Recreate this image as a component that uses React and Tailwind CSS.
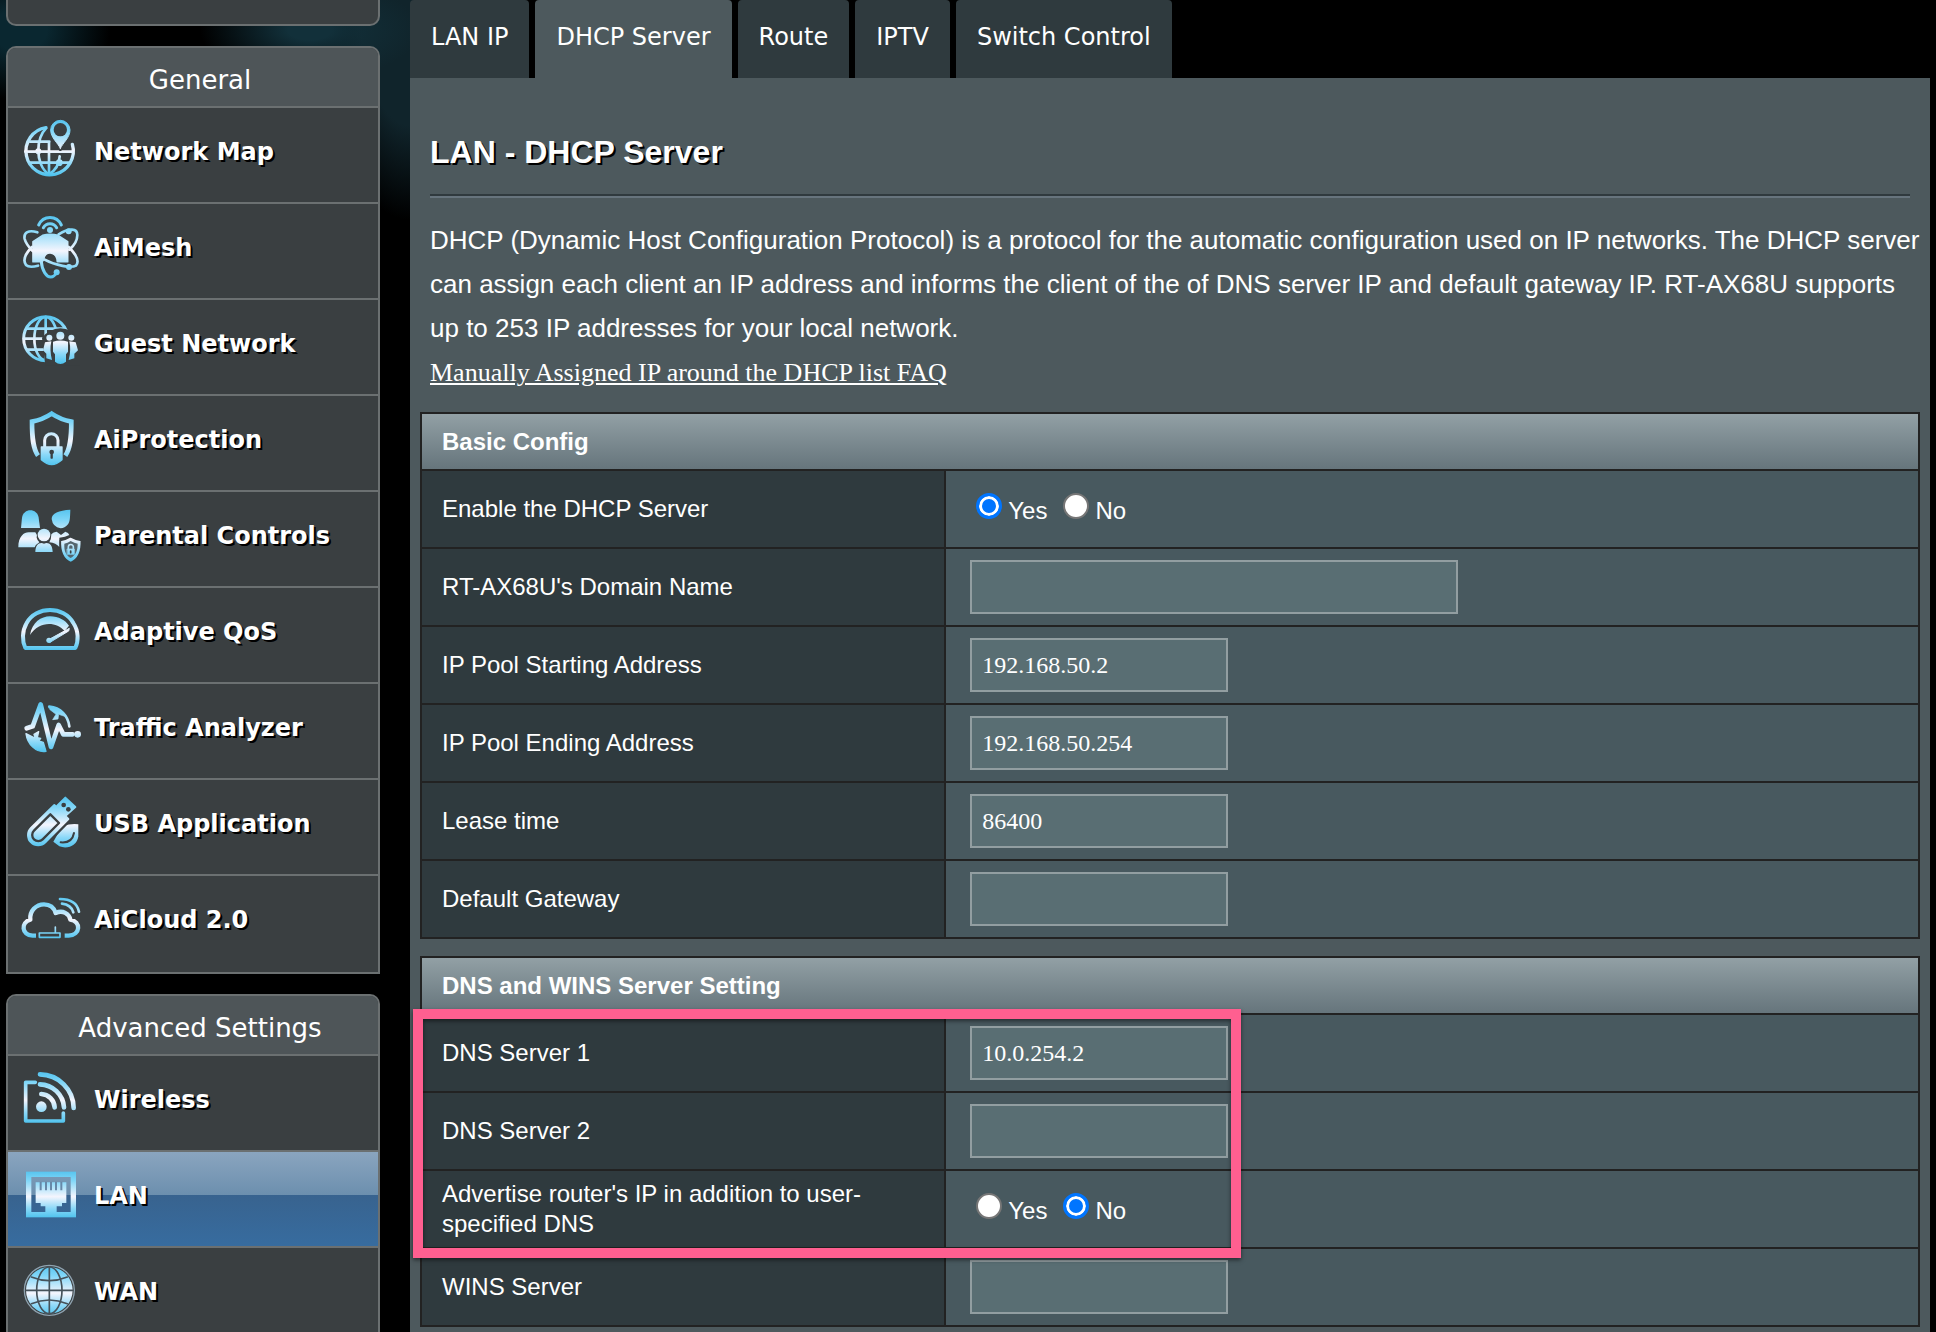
import { useState } from "react";

const SHADE = "#3a3f41";

function Icon({ id, top = 20, bottom = 190, children }) {
  return (
    <svg
      viewBox="0 0 216 216"
      className="size-18 shrink-0"
      fill="none"
      stroke={`url(#${id})`}
      strokeLinecap="round"
      strokeLinejoin="round"
      aria-hidden="true"
    >
      <defs>
        <linearGradient id={id} gradientUnits="userSpaceOnUse" x1="0" x2="0" y1={top} y2={bottom}>
          <stop offset="0" stopColor="#55c3ee" />
          <stop offset="0.2" stopColor="#7fd6f8" />
          <stop offset="0.55" stopColor="#f4f5fd" />
          <stop offset="0.8" stopColor="#8ad8f8" />
          <stop offset="1" stopColor="#4fc3ee" />
        </linearGradient>
      </defs>
      {children}
    </svg>
  );
}

function NetworkMapIcon() {
  const g = "url(#i-map)";
  return (
    <Icon id="i-map" top={15} bottom={182}>
      <path d="M102 38 A71 71 0 1 0 181 88" strokeWidth="10" />
      <path d="M102 40 C84 58 79 82 79 107 S88 164 111 178 C134 164 142 140 143 124" strokeWidth="8" />
      <path d="M111 80 V178 M54 80 H112 M40 110 H180 M52 143 H172" strokeWidth="8" />
      <circle cx="79" cy="109" r="9" fill={g} stroke="none" />
      <circle cx="142" cy="143" r="10" fill={g} stroke="none" />
      <path d="M145 103 C138 84 117 68 117 45 A28 28 0 1 1 173 45 C173 68 152 84 145 103Z" fill={g} stroke={SHADE} strokeWidth="10" />
      <path d="M145 100 C138 84 116 68 116 45 A29 29 0 1 1 174 45 C174 68 152 84 145 100Z" fill={g} strokeWidth="3" />
      <circle cx="145" cy="44" r="20" fill={SHADE} stroke="none" />
    </Icon>
  );
}

function AiMeshIcon() {
  const g = "url(#i-mesh)";
  return (
    <Icon id="i-mesh" top={15} bottom={205}>
      <path d="M80 42 C94 12 134 12 148 42 M94 50 C103 34 125 34 134 50" strokeWidth="9" />
      <circle cx="114" cy="57" r="9" fill={g} stroke="none" />
      <path d="M76 64 C50 56 34 64 38 84 C42 100 52 110 62 120 M60 108 C38 130 32 148 42 162 C50 170 64 168 78 164" strokeWidth="8" />
      <path d="M140 70 C172 50 196 52 196 72 C196 90 186 104 172 116 M170 108 C192 130 204 150 192 164 C178 172 130 164 98 146" strokeWidth="8" />
      <path d="M88 152 C90 180 104 198 116 198 C124 198 130 192 134 184" strokeWidth="9" />
      <circle cx="170" cy="61" r="9" fill={g} stroke="none" />
      <circle cx="171" cy="168" r="9" fill={g} stroke="none" />
      <circle cx="134" cy="184" r="9" fill={g} stroke="none" />
      <path d="M63 92 L92 73 Q114 67 138 73 L167 92 V152 H136 C134 118 96 118 95 146 L90 152 H63Z" fill={g} strokeWidth="5" />
    </Icon>
  );
}

function GuestNetworkIcon() {
  const g = "url(#i-guest)";
  return (
    <Icon id="i-guest" top={26} bottom={170}>
      <circle cx="101" cy="95" r="66" strokeWidth="9" />
      <ellipse cx="101" cy="95" rx="34" ry="65" strokeWidth="8" />
      <path d="M101 30 V160 M46 65 H156 M36 95 H166 M46 128 H156" strokeWidth="8" />
      <path d="M90 92 Q112 66 145 64 Q178 66 204 92 V176 H100Z" fill={SHADE} stroke="none" />
      <g fill={g} stroke="none">
        <circle cx="145" cy="86" r="12" />
        <circle cx="112" cy="92" r="9" />
        <circle cx="178" cy="92" r="9" />
        <path d="M123 104 Q145 97 168 104 V134 L162 142 V164 Q145 178 129 164 V142 L123 134Z" />
        <path d="M99 106 L118 103 Q112 130 120 159 L103 154 V140 L93 130Z" />
        <path d="M191 106 L172 103 Q178 130 170 159 L187 154 V140 L198 130Z" />
      </g>
    </Icon>
  );
}

function AiProtectionIcon() {
  const g = "url(#i-protect)";
  return (
    <Icon id="i-protect" top={24} bottom={188}>
      <path d="M78 158 C64 138 60 110 60 56 Q92 50 119 32 Q146 50 178 56 C178 110 174 138 160 158" strokeWidth="14" strokeLinecap="butt" strokeLinejoin="miter" />
      <path d="M98 134 V112 A20 20 0 0 1 138 112 V134" strokeWidth="9" />
      <path d="M88 132 H150 V170 Q134 184 119 185 Q104 184 88 170Z" fill={g} strokeWidth="4" />
      <circle cx="119" cy="147" r="7" fill={SHADE} stroke="none" />
      <path d="M119 147 V164" stroke={SHADE} strokeWidth="7" />
    </Icon>
  );
}

function ParentalIcon() {
  const g = "url(#i-parent)";
  return (
    <Icon id="i-parent" top={30} bottom={192}>
      <g fill={g} stroke="none">
        <path d="M27 87 L30 56 C34 26 76 26 80 56 L84 87Z" />
        <path d="M119 60 C119 42 140 34 175 32 C174 60 174 66 168 76 Q158 88 146 88 Q122 84 119 60Z" />
        <path d="M19 145 C19 112 36 100 50 100 H70 Q76 106 74 116 Q76 124 82 130 Q72 136 68 145Z" />
        <path d="M118 106 Q124 98 134 98 L147 108 L160 98 Q170 100 172 108 Q160 114 142 116 V144 Q132 132 112 130 Q118 120 118 106Z" />
        <circle cx="96" cy="108" r="19" />
        <path d="M70 159 C70 138 82 128 96 134 C110 128 122 138 122 159Z" />
      </g>
      <path d="M145 124 Q162 122 176 113 Q192 122 208 124 C210 160 198 181 176 191 C154 181 143 160 145 124Z" fill={g} stroke={SHADE} strokeWidth="5" />
      <path d="M157 134 Q167 132 176 126 Q187 132 197 134 C197 156 191 168 176 177 C161 168 156 156 157 134Z" fill="#55666f" stroke="none" />
      <path d="M169 150 V144 A7 7 0 0 1 184 144 V150" strokeWidth="5" />
      <path d="M166 150 H187 V166 H166Z" fill={g} strokeWidth="2" />
      <path d="M176 156 V161" stroke={SHADE} strokeWidth="5" />
    </Icon>
  );
}

function QosIcon() {
  const g = "url(#i-qos)";
  return (
    <Icon id="i-qos" top={40} bottom={166}>
      <path d="M40 159 C30 138 30 108 44 84 C72 32 156 32 184 84 C200 108 200 138 190 159Z" strokeWidth="12" />
      <path d="M54 120 C60 82 88 64 114 64 C140 64 160 76 171 92 L158 108 C132 78 80 78 54 120Z" fill={g} stroke="none" />
      <path d="M106 136 L172 100 L170 108 L114 142Z" fill={g} strokeWidth="3" />
      <circle cx="111" cy="136" r="8" fill={g} stroke="none" />
    </Icon>
  );
}

function TrafficIcon() {
  const g = "url(#i-traffic)";
  return (
    <Icon id="i-traffic" top={32} bottom={184}>
      <path d="M44 112 L62 106 L86 40 L117 168 L140 102 L154 130 H182" strokeWidth="14" />
      <circle cx="197" cy="130" r="10" fill={g} stroke="none" />
      <path d="M112 47 C146 50 168 74 172 106" strokeWidth="8" />
      <path d="M110 46 L150 60 L158 76 L140 70 L138 84 L122 86 L132 70 L114 56Z" fill={g} strokeWidth="2" />
      <path d="M42 128 C46 160 72 186 102 181 L94 154 L80 150 L86 142 L76 140 L80 122 L66 130 L70 142Z" fill={g} strokeWidth="4" />
    </Icon>
  );
}

function UsbIcon() {
  const g = "url(#i-usb)";
  return (
    <Icon id="i-usb" top={30} bottom={182}>
      <path d="M150 118 Q180 108 199 112 V148 C196 176 166 188 142 178 L124 164Z" fill={g} stroke="none" />
      <path d="M186 138 C182 160 166 168 146 166" stroke={SHADE} strokeWidth="6" />
      <path d="M127 54 L169 96 L100 166 A30 30 0 0 1 57 123Z" fill={SHADE} stroke={SHADE} strokeWidth="20" />
      <path d="M127 54 L169 96 L100 166 A30 30 0 0 1 57 123Z" fill={g} strokeWidth="6" />
      <path d="M115 82 L141 108 L92 157 A17 17 0 0 1 66 131Z" stroke={SHADE} strokeWidth="7" />
      <path d="M160 32 L190 60 L163 84 L135 57Z" fill={g} strokeWidth="6" />
      <circle cx="155" cy="54" r="7" fill={SHADE} stroke="none" />
      <circle cx="169" cy="67" r="7" fill={SHADE} stroke="none" />
    </Icon>
  );
}

function AiCloudIcon() {
  return (
    <Icon id="i-cloud" top={40} bottom={168}>
      <path d="M72 158 H62 C28 156 26 118 55 110 C52 84 72 64 96 64 C114 64 126 74 131 90 C152 80 172 92 175 110 C208 116 206 156 170 158 H158" strokeWidth="13" strokeLinecap="butt" />
      <path d="M82 150 H144 V163 H82Z M130 150 V132" strokeWidth="5" />
      <path d="M144 48 C176 48 196 62 201 86 M150 62 C168 64 180 74 184 88" strokeWidth="8" />
    </Icon>
  );
}

function WirelessIcon() {
  return (
    <Icon id="i-wifi" top={28} bottom={180}>
      <path d="M70 58 H41 V174 H154 V150" strokeWidth="11" />
      <circle cx="88" cy="131" r="16" fill="url(#i-wifi)" stroke="none" />
      <path d="M88 93 A42 42 0 0 1 128 133 M84 64 A74 74 0 0 1 156 133 M84 34 A102 102 0 0 1 185 135" strokeWidth="14" />
    </Icon>
  );
}

function LanIcon() {
  return (
    <Icon id="i-lan" top={36} bottom={176}>
      <rect x="50" y="46" width="134" height="121" strokeWidth="16" strokeLinejoin="miter" />
      <path d="M71 70 H163 V132 H150 V142 H134 V168 H100 V142 H86 V132 H71Z" fill="url(#i-lan)" stroke="none" />
      <path d="M86 68 V94 M102 68 V94 M117 68 V94 M132 68 V94 M148 68 V94" stroke="#6788a8" strokeWidth="6" strokeLinecap="butt" />
    </Icon>
  );
}

function WanIcon() {
  return (
    <Icon id="i-wan" top={30} bottom={184}>
      <circle cx="112" cy="106" r="75" stroke="#8fa3b0" strokeWidth="4" />
      <circle cx="112" cy="106" r="70" fill="url(#i-wan)" stroke="none" />
      <g stroke="#46525a" strokeWidth="5">
        <path d="M112 36 V176 M42 106 H182" />
        <ellipse cx="112" cy="106" rx="38" ry="70" />
        <path d="M58 66 Q112 88 166 66 M58 146 Q112 124 166 146" />
      </g>
    </Icon>
  );
}

const general = [
  ["Network Map", NetworkMapIcon],
  ["AiMesh", AiMeshIcon],
  ["Guest Network", GuestNetworkIcon],
  ["AiProtection", AiProtectionIcon],
  ["Parental Controls", ParentalIcon],
  ["Adaptive QoS", QosIcon],
  ["Traffic Analyzer", TrafficIcon],
  ["USB Application", UsbIcon],
  ["AiCloud 2.0", AiCloudIcon],
];

const advanced = [
  ["Wireless", WirelessIcon],
  ["LAN", LanIcon],
  ["WAN", WanIcon],
];

function Menu({ title, items, active }) {
  return (
    <section className="overflow-hidden rounded-t-[10px] border-2 border-[#6b7071] bg-[#3a3f41]">
      <h2 className="flex h-[60px] items-center justify-center border-b-2 border-[#6b7071] bg-[#4e5558] pt-1.5 pl-3.5 text-[26px] leading-8">
        {title}
      </h2>
      <ul>
        {items.map(([label, Glyph]) => (
          <li key={label} className="h-24 border-b-2 border-[#6b7071] last:border-b-0">
            <a
              href={`#${label}`}
              className={
                "flex h-full items-start pl-1 font-bold text-white [text-shadow:2px_2px_0_#000] " +
                (label === active
                  ? "bg-[linear-gradient(#8aa5bf_0%,#6c8fae_46%,#38638f_46%,#376c9f_100%)]"
                  : "bg-[#3a3f41]")
              }
            >
              <span className="flex h-[86px] items-center gap-2.5 text-[24px] leading-8">
                <Glyph />
                <span className="pt-0.5">{label}</span>
              </span>
            </a>
          </li>
        ))}
      </ul>
    </section>
  );
}

const tabs = ["LAN IP", "DHCP Server", "Route", "IPTV", "Switch Control"];

function TextField({ id, value = "", wide }) {
  const [text, setText] = useState(value);
  return (
    <input
      id={id}
      type="text"
      value={text}
      onChange={(e) => setText(e.target.value)}
      className={
        "block h-[54px] border-2 border-[#929ea1] bg-[#596e73] px-2.5 font-['Liberation_Serif',serif] text-[24px] text-white outline-none " +
        (wide ? "w-[488px]" : "w-[258px]")
      }
    />
  );
}

function YesNo({ name, label, value }) {
  const [picked, setPicked] = useState(value);
  return (
    <div role="radiogroup" aria-label={label} className="flex items-center gap-4 pl-1.5">
      {["Yes", "No"].map((option) => (
        <label key={option} className="flex items-start gap-1.5">
          <input
            type="radio"
            name={name}
            checked={picked === option}
            onChange={() => setPicked(option)}
            className="size-[26px] appearance-none rounded-full border-2 border-[#767676] bg-white checked:border-[3px] checked:border-[#0075ff] checked:bg-[#0075ff] checked:shadow-[inset_0_0_0_3px_#fff]"
          />
          <span className="pt-1 leading-7">{option}</span>
        </label>
      ))}
    </div>
  );
}

function Settings({ title, rows }) {
  return (
    <table className="w-full border-collapse text-[24px] leading-[30px]">
      <thead>
        <tr>
          <th
            colSpan={2}
            className="h-[57px] border-2 border-[#222] bg-linear-to-b from-[#92a0a5] to-[#66757c] px-5 text-left font-bold"
          >
            {title}
          </th>
        </tr>
      </thead>
      <tbody>
        {rows.map((row) => (
          <tr key={row.id} className="h-[78px]">
            <th scope="row" className="w-[35%] border-2 border-[#222] bg-[#2f3a3e] px-5 text-left font-normal">
              {row.radio ? row.label : <label htmlFor={row.id}>{row.label}</label>}
            </th>
            <td className="border-2 border-[#222] bg-[#48595f] px-6">
              {row.radio ? (
                <YesNo name={row.id} label={row.label} value={row.radio} />
              ) : (
                <TextField id={row.id} value={row.value} wide={row.wide} />
              )}
            </td>
          </tr>
        ))}
      </tbody>
    </table>
  );
}

const basicRows = [
  { id: "dhcp-enable", label: "Enable the DHCP Server", radio: "Yes" },
  { id: "domain", label: "RT-AX68U's Domain Name", wide: true },
  { id: "pool-start", label: "IP Pool Starting Address", value: "192.168.50.2" },
  { id: "pool-end", label: "IP Pool Ending Address", value: "192.168.50.254" },
  { id: "lease", label: "Lease time", value: "86400" },
  { id: "gateway", label: "Default Gateway" },
];

const dnsRows = [
  { id: "dns1", label: "DNS Server 1", value: "10.0.254.2" },
  { id: "dns2", label: "DNS Server 2" },
  { id: "advertise", label: "Advertise router's IP in addition to user-specified DNS", radio: "No" },
  { id: "wins", label: "WINS Server" },
];

export default function App() {
  return (
    <div className="flex h-screen items-stretch gap-[30px] overflow-hidden bg-black bg-[radial-gradient(ellipse_90px_70px_at_20px_30px,#0a2730_30%,transparent),radial-gradient(ellipse_110px_50px_at_310px_30px,#12303a_20%,transparent),radial-gradient(ellipse_90px_210px_at_410px_10px,#10242b_55%,transparent)] px-1.5 font-['Liberation_Sans',Arial,sans-serif] text-white">
      <nav aria-label="Main menu" className="flex w-[374px] shrink-0 flex-col gap-5 font-['DejaVu_Sans',Verdana,sans-serif]">
        <div className="h-[26px] shrink-0 rounded-b-[10px] border-2 border-t-0 border-[#6b7071] bg-[#3a3f41]" />
        <div className="flex flex-col gap-5">
          <Menu title="General" items={general} />
          <Menu title="Advanced Settings" items={advanced} active="LAN" />
        </div>
      </nav>

      <main className="flex min-w-0 flex-1 flex-col">
        <div role="tablist" className="flex shrink-0 gap-1.5 font-['DejaVu_Sans',Verdana,sans-serif] text-[24px] leading-8">
          {tabs.map((tab) => (
            <button
              key={tab}
              type="button"
              role="tab"
              aria-selected={tab === "DHCP Server"}
              className={
                "h-[78px] rounded-t-[4px] px-[21px] pb-1 " +
                (tab === "DHCP Server" ? "bg-[#4d595d]" : "bg-[#2f3a3e]")
              }
            >
              {tab}
            </button>
          ))}
        </div>

        <div className="flex-1 bg-[#4d595d] px-2.5 pt-[54px]">
          <div className="pl-2.5">
            <h1 className="text-[32px] leading-10 font-bold [text-shadow:2px_2px_0_#000]">LAN - DHCP Server</h1>
            <hr className="mt-[22px] mr-2.5 h-1 border-y-2 border-t-[#303a3e] border-b-[#67747d]" />
            <p className="mt-5 text-[26px] leading-[44px]">
              DHCP (Dynamic Host Configuration Protocol) is a protocol for the automatic configuration used on IP
              networks. The DHCP server can assign each client an IP address and informs the client of the of DNS
              server IP and default gateway IP. RT-AX68U supports up to 253 IP addresses for your local network.
              <br />
              <a href="#faq" className="font-['Liberation_Serif',serif] underline">
                Manually Assigned IP around the DHCP list FAQ
              </a>
            </p>
          </div>

          <div className="mt-[17px]">
            <Settings title="Basic Config" rows={basicRows} />
          </div>
          <div className="relative mt-[17px]">
            <Settings title="DNS and WINS Server Setting" rows={dnsRows} />
            <div className="pointer-events-none absolute top-[53px] -left-[7px] h-[249px] w-[828px] border-[10px] border-[#ff5f90] shadow-[0_2px_4px_rgba(0,0,0,0.5),inset_0_2px_4px_rgba(0,0,0,0.5)]" />
          </div>
        </div>
      </main>
    </div>
  );
}
